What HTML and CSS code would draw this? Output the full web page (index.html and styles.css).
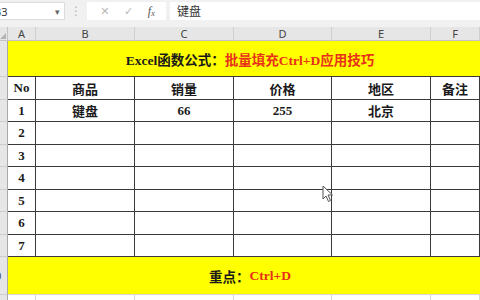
FILE: index.html
```html
<!DOCTYPE html>
<html>
<head>
<meta charset="utf-8">
<link rel="stylesheet" href="styles.css">
</head>
<body>
<div class="toolbar">
  <div class="namebox"><span class="nametext">B3</span><span class="caret">▾</span></div>
  <div class="dots">⋮</div>
  <div class="fbtns">
    <span class="fb x">✕</span>
    <span class="fb ok">✓</span>
    <span class="fb fx">f<sub>x</sub></span>
  </div>
  <div class="finput">键盘</div>
</div>
<div class="sheet">
  <div class="corner"><span class="tri"></span></div>
  <div class="ch">A</div><div class="ch">B</div><div class="ch">C</div><div class="ch">D</div><div class="ch">E</div><div class="ch last">F</div>

  <div class="rh"><span>1</span></div>
  <div class="banner title">Excel函数公式：<span class="red">批量填充Ctrl+D应用技巧</span></div>

  <div class="rh"><span>2</span></div>
  <div class="c">No</div><div class="c">商品</div><div class="c">销量</div><div class="c">价格</div><div class="c">地区</div><div class="c">备注</div>

  <div class="rh"><span>3</span></div>
  <div class="c">1</div><div class="c">键盘</div><div class="c">66</div><div class="c">255</div><div class="c">北京</div><div class="c"></div>

  <div class="rh"><span>4</span></div>
  <div class="c">2</div><div class="c"></div><div class="c"></div><div class="c"></div><div class="c"></div><div class="c"></div>

  <div class="rh"><span>5</span></div>
  <div class="c">3</div><div class="c"></div><div class="c"></div><div class="c"></div><div class="c"></div><div class="c"></div>

  <div class="rh"><span>6</span></div>
  <div class="c">4</div><div class="c"></div><div class="c"></div><div class="c"></div><div class="c"></div><div class="c"></div>

  <div class="rh"><span>7</span></div>
  <div class="c">5</div><div class="c"></div><div class="c"></div><div class="c"></div><div class="c"></div><div class="c"></div>

  <div class="rh"><span>8</span></div>
  <div class="c">6</div><div class="c"></div><div class="c"></div><div class="c"></div><div class="c"></div><div class="c"></div>

  <div class="rh"><span>9</span></div>
  <div class="c">7</div><div class="c"></div><div class="c"></div><div class="c"></div><div class="c"></div><div class="c"></div>

  <div class="rh"><span>10</span></div>
  <div class="banner foot">重点：<span class="red">Ctrl+D</span></div>

  <div class="rh"><span>11</span></div>
  <div class="e"></div><div class="e"></div><div class="e"></div><div class="e"></div><div class="e"></div><div class="e"></div>

  <svg class="cursor" width="12" height="18" viewBox="0 0 12 18">
    <path d="M1 1 L1 14 L4 11 L6.5 16.5 L8.5 15.5 L6 10 L10.5 10 Z" fill="#fff" stroke="#555" stroke-width="1" stroke-linejoin="round"/>
  </svg>
</div>
</body>
</html>
```
FILE: styles.css
```css
* { box-sizing: border-box; }
html, body { margin: 0; padding: 0; }
body {
  width: 480px;
  height: 300px;
  overflow: hidden;
  background: #f1f1f1;
  font-family: "Liberation Serif", "Noto Sans CJK SC", serif;
}
.toolbar {
  display: flex;
  align-items: center;
  height: 27px;
  padding: 2px 0 7px 0;
  background: #f1f1f1;
}
.namebox {
  width: 65px;
  height: 18px;
  background: #fff;
  border: 1px solid #dcdcdc;
  border-left: none;
  display: flex;
  align-items: center;
  overflow: hidden;
  font-family: "Noto Sans", sans-serif;
  font-size: 11px;
  color: #333;
}
.nametext { margin-left: -6px; flex: 1; }
.caret { font-size: 9px; color: #666; margin-right: 4px; }
.dots {
  width: 22px;
  text-align: center;
  color: #b5b5b5;
  font-size: 12px;
  font-family: "DejaVu Sans", sans-serif;
}
.fbtns {
  width: 79px;
  height: 18px;
  background: #fff;
  display: flex;
  align-items: center;
  justify-content: space-around;
  padding: 0 4px 0 6px;
}
.fb { font-family: "DejaVu Sans", sans-serif; font-size: 11px; color: #b8b8b8; }
.fb.fx { font-family: "Liberation Serif", serif; font-style: italic; color: #555; font-size: 12px; }
.fb.fx sub { font-size: 8px; vertical-align: -1px; }
.finput {
  flex: 1;
  height: 18px;
  margin-left: 4px;
  background: #fff;
  padding-left: 7px;
  font-family: "Noto Sans CJK SC", sans-serif;
  font-size: 12px;
  line-height: 18px;
  color: #333;
}
.sheet {
  position: relative;
  display: grid;
  grid-template-columns: 8px 28px 99px 99px 98px 99px 49px;
  grid-template-rows: 14px 36px 23px 22px 23px 22px 23px 22px 23px 22px 38px 6px;
  background: #fff;
}
.corner {
  background: #e6e6e6;
  border-bottom: 1px solid #c4c4c4;
  border-right: 1px solid #c4c4c4;
  position: relative;
}
.tri {
  position: absolute;
  right: 1px;
  bottom: 1px;
  width: 0; height: 0;
  border-left: 6px solid transparent;
  border-bottom: 6px solid #b4b4b4;
}
.ch {
  background: #e6e6e6;
  border-bottom: 1px solid #c4c4c4;
  border-right: 1px solid #d0d0d0;
  font-family: "Noto Sans", sans-serif;
  font-size: 11px;
  line-height: 13px;
  color: #444;
  text-align: center;
}
.rh {
  background: #e6e6e6;
  border-bottom: 1px solid #cdcdcd;
  border-right: 1px solid #a8a8a8;
  overflow: hidden;
  display: flex;
  align-items: center;
  font-family: "Noto Sans", sans-serif;
  font-size: 11px;
  color: #444;
}
.rh span { display: block; width: 24px; margin-left: -17px; flex: none; text-align: center; }
.banner {
  grid-column: 2 / 8;
  background: #ffff00;
  display: flex;
  align-items: center;
  justify-content: center;
  padding-left: 12px;
  font-weight: bold;
  font-size: 13.5px;
  color: #1a1a1a;
  border-bottom: 1px solid #3a3a3a;
}
.banner.foot { border-bottom: 1px solid #d6d6d6; }
.red { color: #e8301a; }
.c {
  border-right: 1px solid #3a3a3a;
  border-bottom: 1px solid #3a3a3a;
  display: flex;
  align-items: center;
  justify-content: center;
  font-weight: bold;
  font-size: 13px;
  color: #1a1a1a;
}
.e {
  border-right: 1px solid #d6d6d6;
}
.cursor {
  position: absolute;
  left: 322px;
  top: 158px;
}
```
